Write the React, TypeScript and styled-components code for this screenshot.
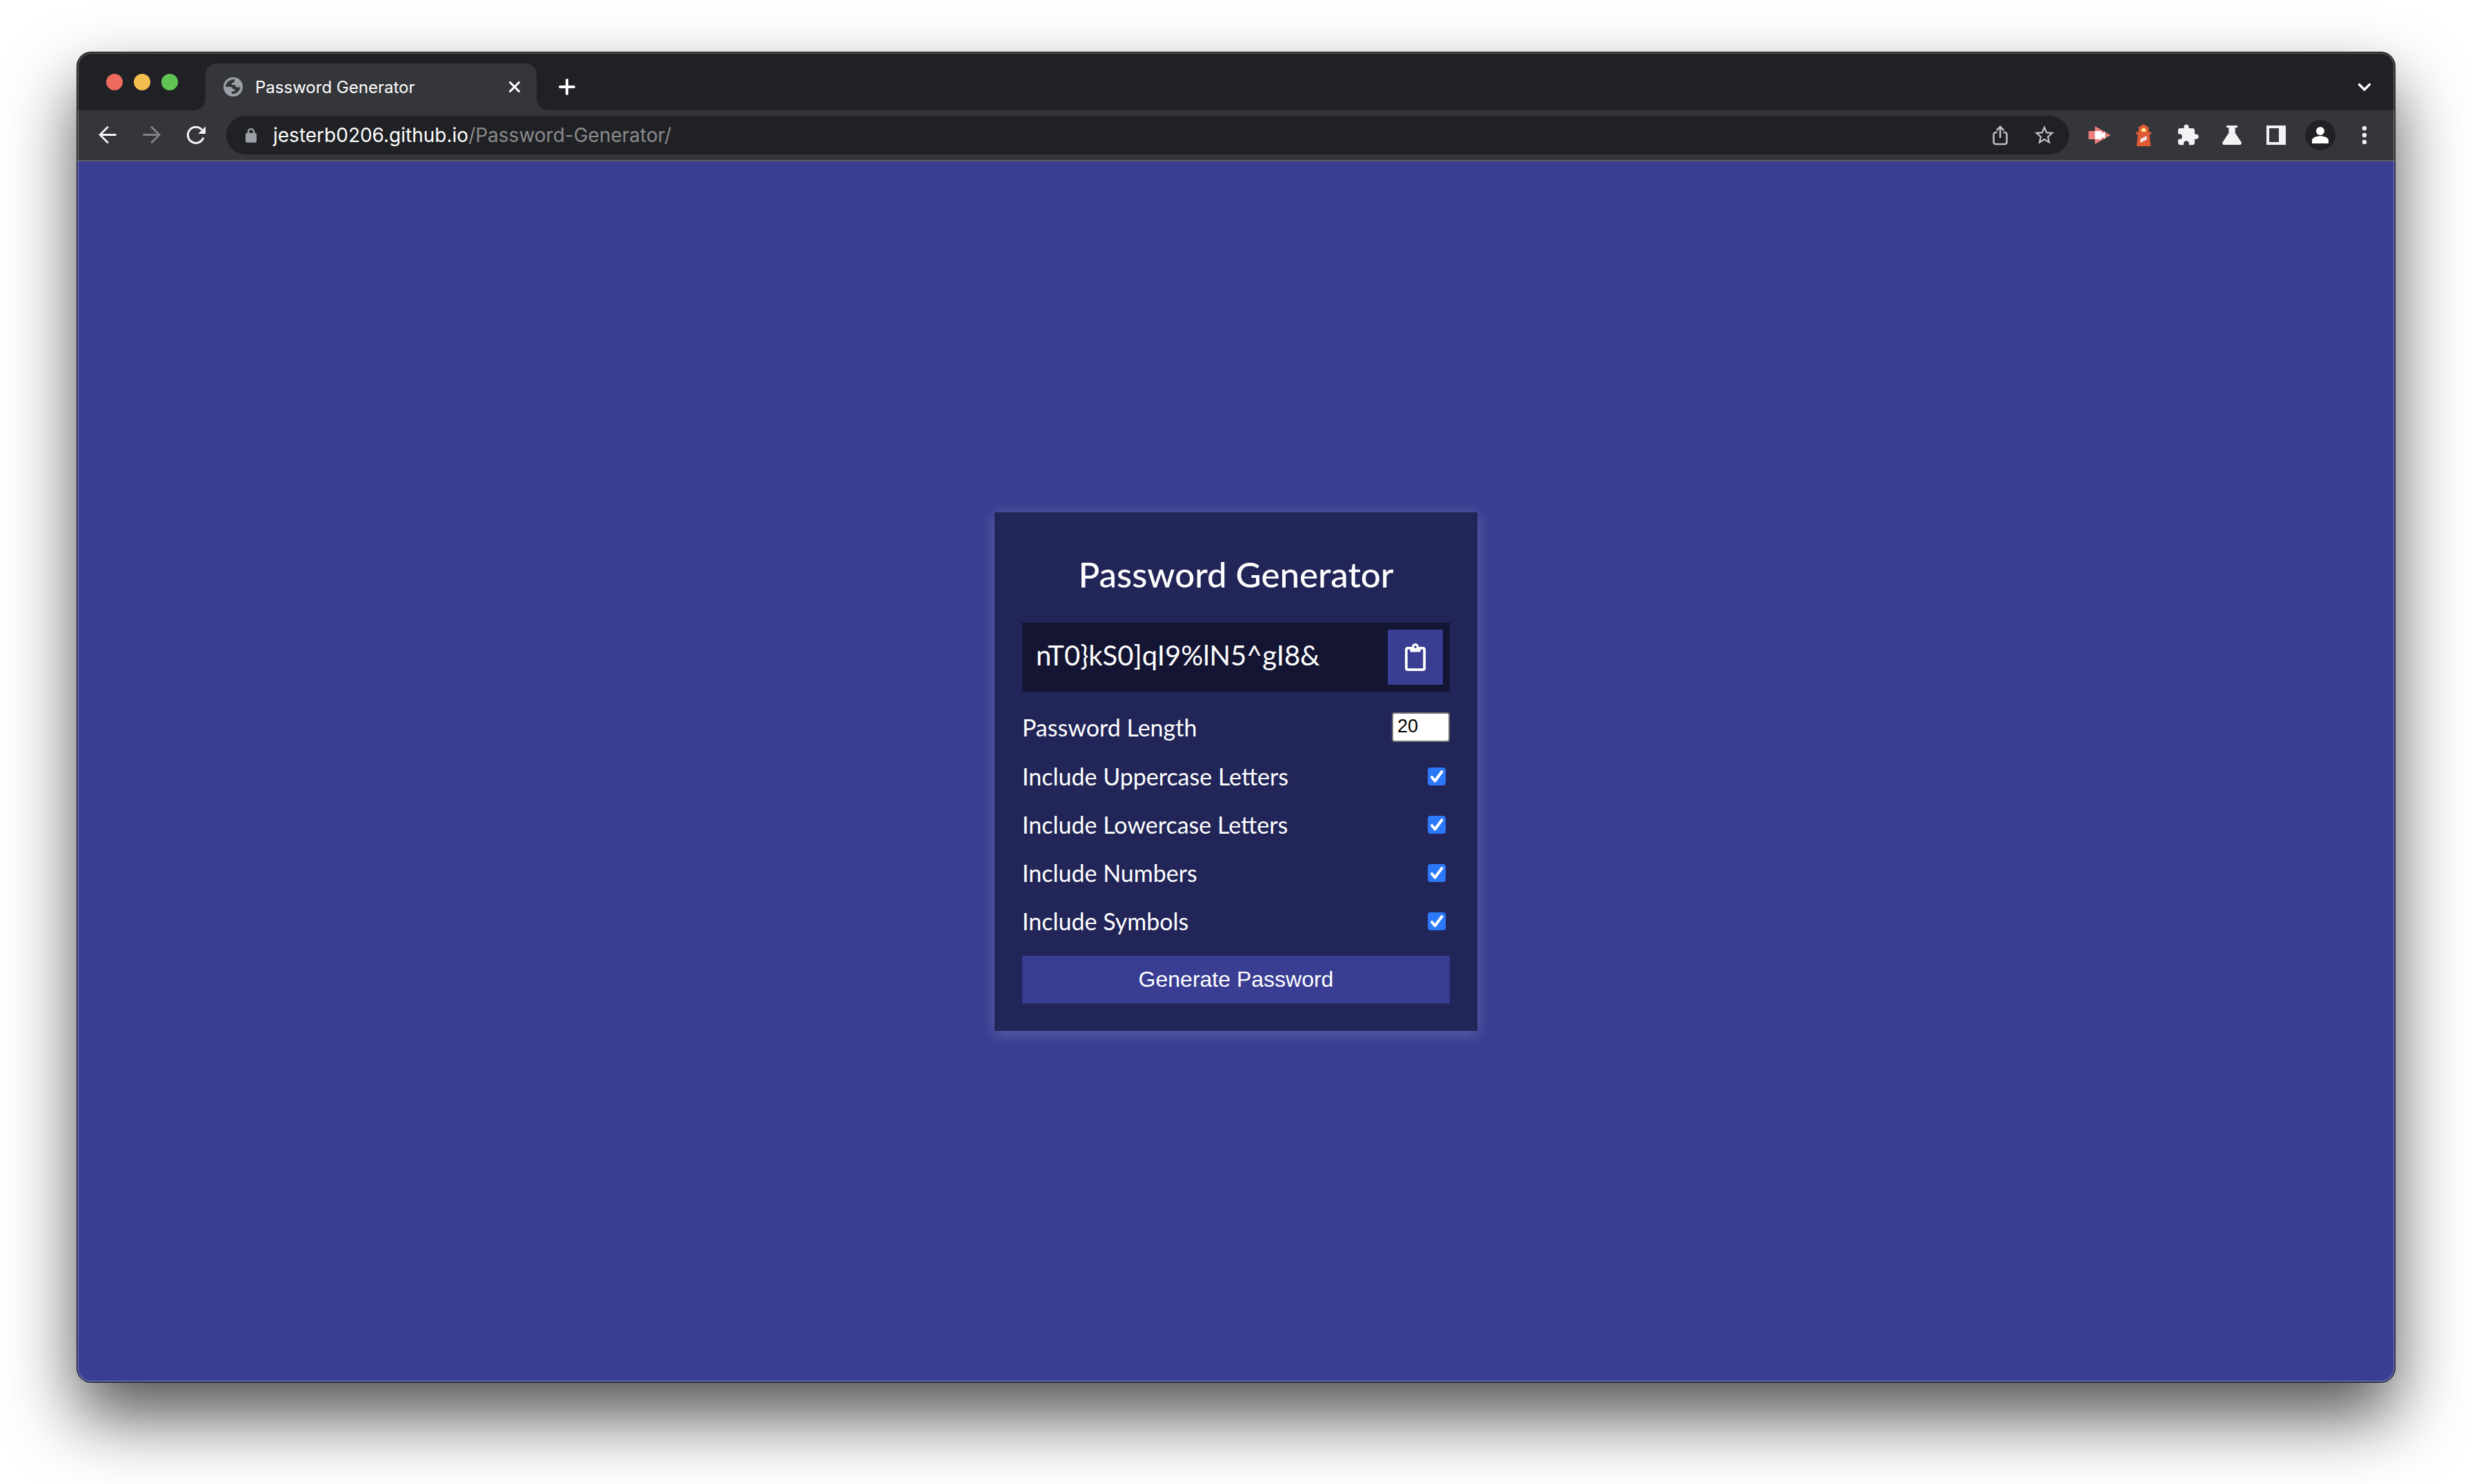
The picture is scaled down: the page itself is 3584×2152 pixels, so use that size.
import React, { useState } from "react";
import styled, { createGlobalStyle } from "styled-components";
import { FaRegClipboard } from "react-icons/fa";

const uiFont = `Inter, Roboto, "Liberation Sans", sans-serif`;
const pageFont = `Lato, "Open Sans", sans-serif`;
const formFont = `"Liberation Sans", Arial, sans-serif`;

const GlobalStyle = createGlobalStyle`
  *, *::before, *::after { box-sizing: border-box; }
  body { margin: 0; background: #ffffff; }
  button, input { margin: 0; font: inherit; color: inherit; }
`;

const Desktop = styled.div`
  display: flex;
  min-height: 100vh;
  padding: 76px 112px 148px;
  overflow: hidden;
`;

const BrowserWindow = styled.div`
  position: relative;
  display: flex;
  flex: 1;
  flex-direction: column;
  overflow: hidden;
  border-radius: 20px;
  background: #202124;
  box-shadow: 0 0 0 1px #000000, 0 50px 100px rgba(0, 0, 0, 0.68);

  &::after {
    content: "";
    position: absolute;
    inset: 0;
    border-radius: inherit;
    box-shadow: inset 0 0 0 2px rgba(255, 255, 255, 0.22);
    pointer-events: none;
  }
`;

const TabStrip = styled.header`
  display: flex;
  align-items: flex-end;
  height: 84px;
  padding-right: 28px;
  font-family: ${uiFont};
  color: #ffffff;
`;

const TrafficLights = styled.div`
  display: flex;
  gap: 16px;
  width: 186px;
  padding: 0 0 29px 42px;
`;

const Light = styled.button<{ $color: string }>`
  width: 24px;
  height: 24px;
  padding: 0;
  border: 0;
  border-radius: 50%;
  background: ${(p) => p.$color};
`;

const Tab = styled.div`
  position: relative;
  display: flex;
  align-items: center;
  width: 480px;
  height: 68px;
  padding: 0 16px 0 26px;
  border-radius: 16px 16px 0 0;
  background: #35363a;
  font-size: 24px;

  &::before,
  &::after {
    content: "";
    position: absolute;
    bottom: 0;
    width: 16px;
    height: 16px;
  }
  &::before {
    right: 100%;
    background: radial-gradient(circle at 0 0, transparent 15px, #35363a 16px);
  }
  &::after {
    left: 100%;
    background: radial-gradient(circle at 100% 0, transparent 15px, #35363a 16px);
  }
`;

const TabTitle = styled.span`
  flex: 1;
  padding-left: 18px;
  white-space: nowrap;
`;

const IconButton = styled.button<{ $size?: number; $color?: string }>`
  display: grid;
  place-items: center;
  flex: none;
  width: ${(p) => p.$size ?? 64}px;
  height: ${(p) => p.$size ?? 64}px;
  padding: 0;
  border: 0;
  background: none;
  color: ${(p) => p.$color ?? "#f1f3f4"};
`;

const NewTabSlot = styled.div`
  flex: 1;
  padding: 0 0 2px 12px;
`;

const TabSearchSlot = styled.div`
  padding-bottom: 18px;
`;

const Toolbar = styled.nav`
  display: flex;
  align-items: center;
  height: 74px;
  padding: 0 12px;
  border-bottom: 2px solid #5f6063;
  background: #35363a;
  font-family: ${uiFont};
`;

const AddressBar = styled.div`
  display: flex;
  flex: 1;
  align-items: center;
  height: 56px;
  margin: 0 12px;
  padding: 0 4px;
  border-radius: 28px;
  background: #202124;
  font-size: 28px;
`;

const Address = styled.div`
  flex: 1;
  color: #ffffff;
  white-space: nowrap;
`;

const AddressPath = styled.span`
  color: #8a8b8d;
`;

const Avatar = styled.span`
  display: grid;
  place-items: center;
  width: 44px;
  height: 44px;
  border-radius: 50%;
  background: #202124;
  color: #ffffff;
`;

const Page = styled.main`
  display: flex;
  flex: 1;
  align-items: center;
  justify-content: center;
  background: #393e92;
  color: #ffffff;
  font-family: ${pageFont};
`;

const Card = styled.form`
  display: flex;
  flex-direction: column;
  gap: 30px;
  width: 700px;
  padding: 40px;
  background: #222557;
  box-shadow: 0 4px 20px rgba(255, 255, 255, 0.2);
  font-size: 34px;
  line-height: 40px;
`;

const Title = styled.h2`
  margin: 20px 0 10px;
  font-size: 51px;
  font-weight: 500;
  line-height: 60px;
  text-align: center;
`;

const Result = styled.div`
  display: flex;
  align-items: flex-start;
  justify-content: space-between;
  height: 100px;
  padding: 10px 10px 10px 20px;
  background: #141433;
  font-size: 40px;
  line-height: 74px;
`;

const CopyButton = styled.button`
  display: grid;
  place-items: center;
  width: 80px;
  height: 80px;
  padding: 0;
  border: 0;
  background: #393e92;
  font-size: 40px;
`;

const Setting = styled.div`
  display: flex;
  align-items: center;
  justify-content: space-between;
`;

const LengthInput = styled.input`
  width: 84px;
  height: 43px;
  padding: 0 0 2px 6px;
  border: 2px solid #767676;
  border-radius: 4px;
  background: #ffffff;
  color: #000000;
  font-family: ${formFont};
  font-size: 27px;
`;

const CheckFrame = styled.span`
  display: grid;
  width: 26px;
  height: 26px;
  margin-right: 6px;

  & > * {
    grid-area: 1 / 1;
  }
  & > svg {
    pointer-events: none;
  }
`;

const CheckInput = styled.input`
  width: 26px;
  height: 26px;
  border-radius: 4px;
  background: #ffffff;
  appearance: none;

  &:checked {
    background: #2b78f9;
  }
  &:not(:checked) + svg {
    visibility: hidden;
  }
`;

const GenerateButton = styled.button`
  height: 69px;
  padding: 0 0 2px;
  border: 0;
  background: #393e92;
  font-family: ${formFont};
  font-size: 32px;
`;

type IconProps = { size?: number; box?: number; children: React.ReactNode };

const Icon = ({ size = 32, box = 32, children }: IconProps) => (
  <svg width={size} height={size} viewBox={`0 0 ${box} ${box}`} fill="none" aria-hidden="true">
    {children}
  </svg>
);

const GlobeIcon = () => (
  <Icon size={28} box={28}>
    <circle cx="14" cy="14" r="14" fill="#9aa0a6" />
    <path
      d="M16.5 3.3C11 2.8 6 5.5 4 10c-.8 2-.9 3-.6 4h6.600c2 0 3 1 3 3h3v3.500h-4v3.500c6 1 12-3.500 12.400-10-2 1-5 1.200-6.400-.5-1-1.500 0-2.500-3-2.500h-3V8.500c2 0 4-1 4-3z"
      fill="#35363a"
    />
  </Icon>
);

const settings = [
  { id: "uppercase", label: "Include Uppercase Letters" },
  { id: "lowercase", label: "Include Lowercase Letters" },
  { id: "numbers", label: "Include Numbers" },
  { id: "symbols", label: "Include Symbols" },
];

const CheckSetting = ({ id, label }: { id: string; label: string }) => (
  <Setting>
    <label htmlFor={id}>{label}</label>
    <CheckFrame>
      <CheckInput id={id} type="checkbox" defaultChecked />
      <Icon size={26} box={26}>
        <path d="M6 14l4.500 5.500L20.500 6" stroke="#ffffff" strokeWidth="4" strokeLinecap="round" strokeLinejoin="round" />
      </Icon>
    </CheckFrame>
  </Setting>
);

const BrowserTabs = () => (
  <TabStrip>
    <TrafficLights>
      <Light $color="#ed6a5e" aria-label="Close window" />
      <Light $color="#f5bf4f" aria-label="Minimize window" />
      <Light $color="#61c554" aria-label="Zoom window" />
    </TrafficLights>
    <Tab>
      <GlobeIcon />
      <TabTitle>Password Generator</TabTitle>
      <IconButton $size={32} $color="#ffffff" aria-label="Close tab">
        <Icon>
          <path d="M9.500 9.500l13 13M22.500 9.500l-13 13" stroke="currentColor" strokeWidth="3" strokeLinecap="round" />
        </Icon>
      </IconButton>
    </Tab>
    <NewTabSlot>
      <IconButton $color="#ffffff" aria-label="New tab">
        <Icon>
          <path d="M16 6v20M6 16h20" stroke="currentColor" strokeWidth="4" strokeLinecap="round" />
        </Icon>
      </IconButton>
    </NewTabSlot>
    <TabSearchSlot>
      <IconButton $size={32} $color="#ffffff" aria-label="Search tabs">
        <Icon>
          <path d="M8.500 12.500l7.500 7.500 7.500-7.500" stroke="currentColor" strokeWidth="3.400" strokeLinecap="round" />
        </Icon>
      </IconButton>
    </TabSearchSlot>
  </TabStrip>
);

const BrowserToolbar = () => (
  <Toolbar>
    <IconButton aria-label="Back">
      <Icon>
        <path d="M27.500 15.500H5M16 4.500l-11 11 11 11" stroke="currentColor" strokeWidth="2.800" strokeLinecap="round" />
      </Icon>
    </IconButton>
    <IconButton $color="#838486" aria-label="Forward">
      <Icon>
        <path d="M4.500 15.500H27M16 4.500l11 11-11 11" stroke="currentColor" strokeWidth="2.800" strokeLinecap="round" />
      </Icon>
    </IconButton>
    <IconButton aria-label="Reload">
      <Icon>
        <path d="M26.800 19.500A11.500 11.500 0 1 1 24.500 8.200" stroke="currentColor" strokeWidth="3" />
        <path d="M30 3.300V14H19.300z" fill="currentColor" />
      </Icon>
    </IconButton>
    <AddressBar>
      <IconButton $color="#9aa0a6" aria-label="Site information">
        <Icon>
          <rect x="8" y="12.700" width="16" height="14" rx="2" fill="currentColor" />
          <path d="M12 13.500V11a4 4 0 0 1 8 0v2.500" stroke="currentColor" strokeWidth="2.500" />
        </Icon>
      </IconButton>
      <Address>
        jesterb0206.github.io<AddressPath>/Password-Generator/</AddressPath>
      </Address>
      <IconButton $color="#bdbec0" aria-label="Share">
        <Icon>
          <path
            d="M11.500 12H9.500a3 3 0 0 0-3 3v11a3 3 0 0 0 3 3h13a3 3 0 0 0 3-3V15a3 3 0 0 0-3-3h-2M16 20V5M10.800 9L16 3.800 21.200 9"
            stroke="currentColor"
            strokeWidth="2.600"
          />
        </Icon>
      </IconButton>
      <IconButton $color="#bdbec0" aria-label="Bookmark this tab">
        <Icon size={34} box={24}>
          <path
            fill="currentColor"
            d="M22 9.240l-7.190-.62L12 2 9.190 8.630 2 9.240l5.460 4.730L5.820 21 12 17.270 18.180 21l-1.630-7.030L22 9.240zM12 15.400l-3.760 2.270 1-4.280-3.320-2.880 4.380-.38L12 6.100l1.710 4.040 4.380.38-3.320 2.880 1 4.280L12 15.400z"
          />
        </Icon>
      </IconButton>
    </AddressBar>
    <IconButton aria-label="Screen recorder">
      <Icon>
        <rect y="10" width="12" height="12" rx="1" fill="#ef7f7c" />
        <path d="M9.300 3L32 16 9.300 29z" fill="#ef7f7c" />
        <path d="M9.300 10h8a2 2 0 0 1 2 2v2l4.700-3.500v11L19.300 18v2a2 2 0 0 1-2 2h-8z" fill="#ffffff" />
      </Icon>
    </IconButton>
    <IconButton aria-label="Lighthouse">
      <Icon>
        <path d="M16 0l7.300 4.500v7h3.400V15h-2.500l2.100 17H5.700l2.100-17H5v-3.500h3.700v-7z" fill="#e05a33" />
        <path d="M12.700 11V7.500L16 5l3.300 2.500V11z" fill="#fbe78a" />
        <path d="M11.600 21.500l8.700-4.500v5.500l-9.500 4.500z" fill="#eeeeee" />
      </Icon>
    </IconButton>
    <IconButton aria-label="Extensions">
      <Icon size={34} box={24}>
        <path
          fill="currentColor"
          d="M20.500 11H19V7c0-1.100-.9-2-2-2h-4V3.500C13 2.120 11.880 1 10.500 1S8 2.120 8 3.500V5H4c-1.100 0-1.990.9-1.990 2v3.800H3.500c1.490 0 2.700 1.210 2.700 2.700s-1.210 2.700-2.700 2.700H2V20c0 1.100.9 2 2 2h3.800v-1.500c0-1.490 1.210-2.700 2.700-2.700 1.490 0 2.700 1.210 2.700 2.700V22H17c1.100 0 2-.9 2-2v-4h1.500c1.380 0 2.500-1.120 2.500-2.500S21.880 11 20.500 11z"
        />
      </Icon>
    </IconButton>
    <IconButton aria-label="Experiments">
      <Icon>
        <path
          fill="currentColor"
          d="M8.500 2h15a.5.5 0 0 1 .5.500v2a.5.5 0 0 1-.5.500h-2.800v8l8.500 12.500c1.600 2.500.3 4.500-2.200 4.500H5c-2.500 0-3.800-2-2.200-4.500L11.300 13V5H8.500a.5.5 0 0 1-.5-.5v-2a.5.5 0 0 1 .5-.5z"
        />
      </Icon>
    </IconButton>
    <IconButton aria-label="Side panel">
      <Icon>
        <path fill="currentColor" fillRule="evenodd" d="M2 2h28v28H2zM6 6v20h14V6z" />
      </Icon>
    </IconButton>
    <IconButton aria-label="Profile">
      <Avatar>
        <Icon size={44} box={44}>
          <circle cx="22" cy="16" r="6" fill="currentColor" />
          <path d="M10 34v-4.500c0-4 7-6.200 12-6.200s12 2.200 12 6.200V34z" fill="currentColor" />
        </Icon>
      </Avatar>
    </IconButton>
    <IconButton aria-label="Menu">
      <Icon>
        <circle cx="16" cy="6" r="3.200" fill="currentColor" />
        <circle cx="16" cy="16" r="3.200" fill="currentColor" />
        <circle cx="16" cy="26" r="3.200" fill="currentColor" />
      </Icon>
    </IconButton>
  </Toolbar>
);

export default function App() {
  const [length, setLength] = useState(20);

  return (
    <>
      <GlobalStyle />
      <Desktop>
        <BrowserWindow>
          <BrowserTabs />
          <BrowserToolbar />
          <Page>
            <Card onSubmit={(e) => e.preventDefault()}>
              <Title>Password Generator</Title>
              <Result>
                <span>{"nT0}kS0]qI9%lN5^gI8&"}</span>
                <CopyButton type="button" aria-label="Copy password">
                  <FaRegClipboard />
                </CopyButton>
              </Result>
              <Setting>
                <label htmlFor="length">Password Length</label>
                <LengthInput
                  id="length"
                  type="number"
                  min={4}
                  max={20}
                  value={length}
                  onChange={(e) => setLength(Number(e.target.value))}
                />
              </Setting>
              {settings.map((s) => (
                <CheckSetting key={s.id} {...s} />
              ))}
              <GenerateButton type="submit">Generate Password</GenerateButton>
            </Card>
          </Page>
        </BrowserWindow>
      </Desktop>
    </>
  );
}
